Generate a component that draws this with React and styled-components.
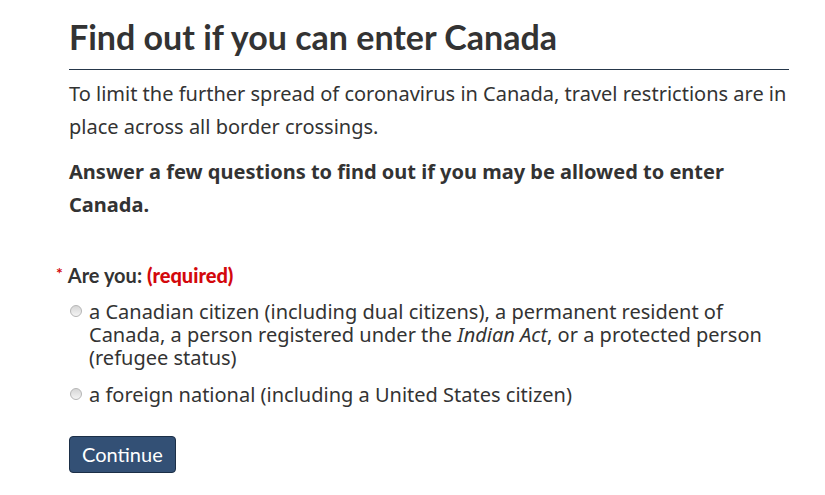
import React, { useState } from "react";
import styled, { createGlobalStyle } from "styled-components";

const GlobalStyle = createGlobalStyle`
  body {
    margin: 0;
    background: #fff;
    color: #333;
    font-family: "Noto Sans", "DejaVu Sans", sans-serif;
  }
`;

const Page = styled.main`
  width: 720px;
  margin-left: 69px;
  padding-top: 16px;
`;

const Title = styled.h1`
  font-family: Lato, "Liberation Sans", sans-serif;
  font-weight: 700;
  font-size: 34px;
  line-height: 42px;
  color: #333;
  margin: 0;
  padding-bottom: 11px;
  border-bottom: 1px solid #26374a;
`;

const Lead = styled.p`
  font-size: 20px;
  line-height: 33px;
  margin: ${(p) => (p.$bold ? "12px" : "7px")} 0 0;
  font-weight: ${(p) => (p.$bold ? 700 : 400)};
`;

const Form = styled.form`
  margin-top: 40px;
  margin-left: -13px;
`;

const Fieldset = styled.fieldset`
  border: 0;
  margin: 0;
  padding: 0;
`;

const Legend = styled.legend`
  font-family: Lato, "Liberation Sans", sans-serif;
  font-weight: 700;
  font-size: 20px;
  line-height: 28px;
  padding: 0;
  display: flex;
  align-items: baseline;
  gap: 5px;
`;

const Star = styled.span`
  color: #d3080c;
  font-size: 16px;
  position: relative;
  top: -4px;
`;

const Required = styled.strong`
  color: #d3080c;
`;

const Options = styled.div`
  display: flex;
  flex-direction: column;
  gap: 14px;
  margin-top: 9px;
  padding-left: 13px;
`;

const Option = styled.label`
  display: flex;
  align-items: flex-start;
  gap: 7px;
  font-size: 20px;
  line-height: 23px;
  color: #333;
`;

const Radio = styled.input`
  appearance: none;
  margin: 5px 0 0 1px;
  width: 12px;
  height: 12px;
  flex: none;
  border-radius: 50%;
  border: 1px solid #b5b5b5;
  background: linear-gradient(#d6d6d6, #f4f4f4);

  &:checked {
    background: radial-gradient(circle, #333 0 3px, #f4f4f4 3.5px);
  }
`;

const Button = styled.button`
  margin-top: 30px;
  margin-left: 13px;
  font-family: Lato, "Liberation Sans", sans-serif;
  font-size: 20px;
  color: #fff;
  background: #335075;
  border: 1px solid #1c2f47;
  border-radius: 4px;
  padding: 5px 12px 6px;
  cursor: pointer;
`;

export default function App() {
  const [choice, setChoice] = useState("");
  return (
    <>
      <GlobalStyle />
      <Page>
        <Title>Find out if you can enter Canada</Title>
        <Lead>
          To limit the further spread of coronavirus in Canada, travel
          restrictions are in place across all border crossings.
        </Lead>
        <Lead $bold>
          Answer a few questions to find out if you may be allowed to enter
          Canada.
        </Lead>
        <Form onSubmit={(e) => e.preventDefault()}>
          <Fieldset>
            <Legend>
              <Star>*</Star>
              <span>
                Are you: <Required>(required)</Required>
              </span>
            </Legend>
            <Options>
              <Option>
                <Radio
                  type="radio"
                  name="status"
                  checked={choice === "ca"}
                  onChange={() => setChoice("ca")}
                />
                <span>
                  a Canadian citizen (including dual citizens), a permanent
                  resident of Canada, a person registered under the{" "}
                  <i>Indian Act</i>, or a protected person (refugee status)
                </span>
              </Option>
              <Option>
                <Radio
                  type="radio"
                  name="status"
                  checked={choice === "fn"}
                  onChange={() => setChoice("fn")}
                />
                <span>a foreign national (including a United States citizen)</span>
              </Option>
            </Options>
          </Fieldset>
          <Button type="submit">Continue</Button>
        </Form>
      </Page>
    </>
  );
}
